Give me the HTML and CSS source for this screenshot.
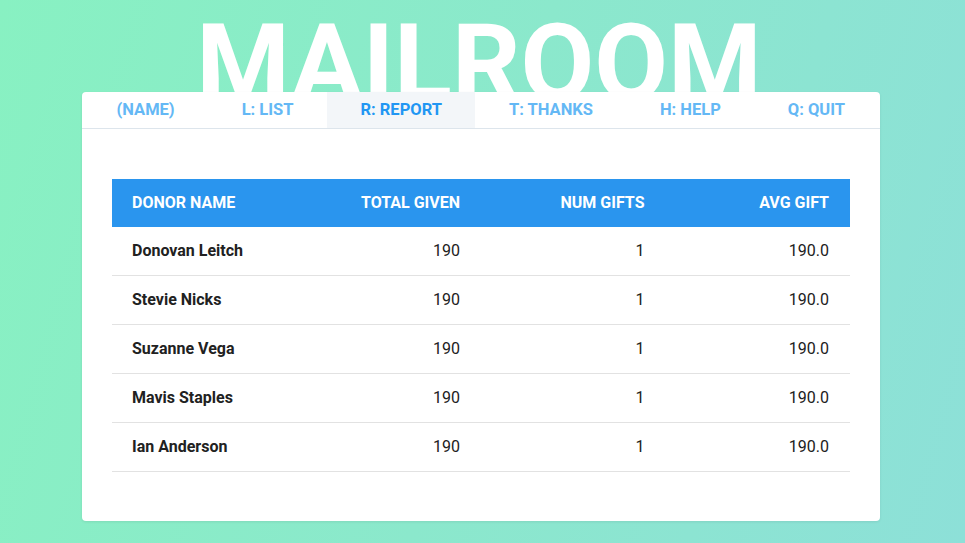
FILE: index.html
```html
<!DOCTYPE html>
<html>
<head>
<meta charset="utf-8">
<link rel="stylesheet" href="styles.css">
</head>
<body>
<div class="page">
  <h1 class="title">MAILROOM</h1>
  <div class="card">
    <nav class="tabs">
      <a class="tab">(NAME)</a>
      <a class="tab">L: LIST</a>
      <a class="tab active">R: REPORT</a>
      <a class="tab">T: THANKS</a>
      <a class="tab">H: HELP</a>
      <a class="tab">Q: QUIT</a>
    </nav>
    <div class="content">
      <table class="report">
        <thead>
          <tr><th class="name">DONOR NAME</th><th>TOTAL GIVEN</th><th>NUM GIFTS</th><th>AVG GIFT</th></tr>
        </thead>
        <tbody>
          <tr><td class="name">Donovan Leitch</td><td>190</td><td>1</td><td>190.0</td></tr>
          <tr><td class="name">Stevie Nicks</td><td>190</td><td>1</td><td>190.0</td></tr>
          <tr><td class="name">Suzanne Vega</td><td>190</td><td>1</td><td>190.0</td></tr>
          <tr><td class="name">Mavis Staples</td><td>190</td><td>1</td><td>190.0</td></tr>
          <tr><td class="name">Ian Anderson</td><td>190</td><td>1</td><td>190.0</td></tr>
        </tbody>
      </table>
    </div>
  </div>
</div>
</body>
</html>
```

FILE: styles.css
```css
html, body {
  margin: 0;
  height: 100%;
}
body {
  background: linear-gradient(105deg, #88f1c2 0%, #8be8cc 50%, #8de0d8 100%);
  font-family: Roboto, "Liberation Sans", sans-serif;
  overflow: hidden;
  padding-right: 3px;
  box-sizing: border-box;
}
.page {
  width: 798px;
  margin: 0 auto;
  padding-top: 10px;
}
.title {
  margin: 0;
  font-size: 107px;
  line-height: 107px;
  font-weight: 700;
  color: #fff;
  text-align: center;
  position: relative;
  left: -2px;
}
.card {
  position: relative;
  z-index: 1;
  margin-top: -25px;
  background: #fff;
  border-radius: 4px;
  box-shadow: 0 1px 3px rgba(0, 0, 0, 0.08);
  height: 429px;
}
.tabs {
  display: flex;
  border-bottom: 1px solid #dde5ec;
  padding-left: 1px;
}
.tab {
  padding: 0 33.5px;
  height: 36px;
  line-height: 35px;
  font-size: 16.5px;
  font-weight: 700;
  color: #64b8f5;
  white-space: nowrap;
}
.tab.active {
  background: #f3f6f9;
  color: #2196f3;
}
.content {
  padding: 50px 30px 0;
}
.report {
  width: 100%;
  border-collapse: collapse;
  table-layout: fixed;
}
.report th {
  background: #2a95ee;
  color: #fff;
  font-size: 16px;
  font-weight: 700;
  height: 47px;
  padding: 0 21px 1px 20px;
  text-align: right;
}
.report td {
  height: 47px;
  padding: 0 21px 1px 20px;
  text-align: right;
  font-size: 16px;
  color: #212121;
  border-bottom: 1px solid #e2e2e2;
}
.report .name {
  text-align: left;
}
.report td.name {
  font-weight: 700;
}
```
